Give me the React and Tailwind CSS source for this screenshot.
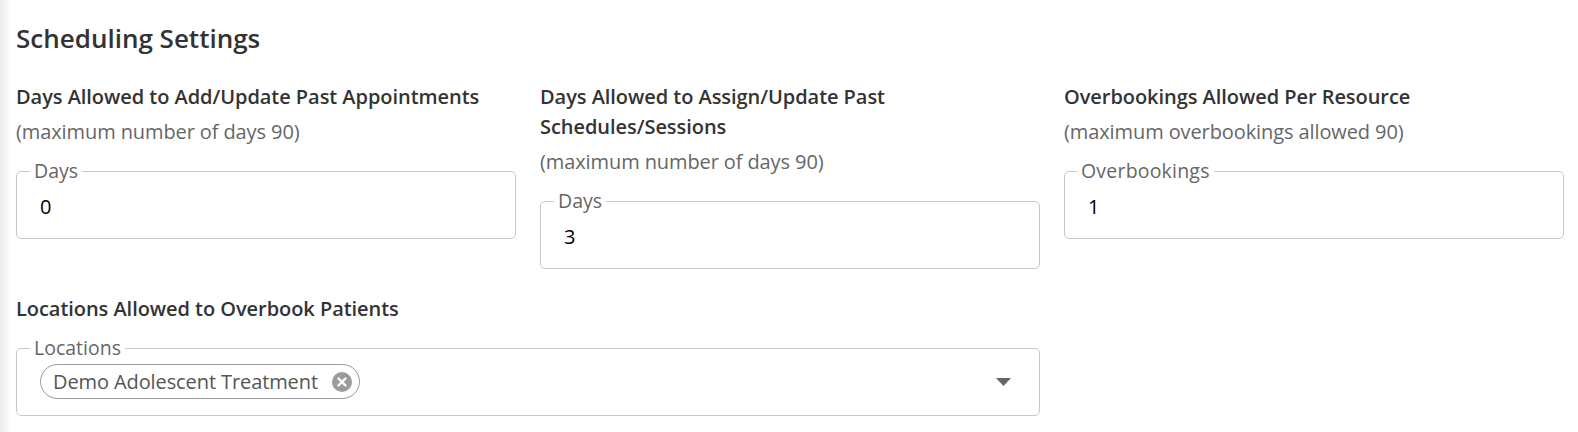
const font = { fontFamily: '"Open Sans", "Noto Sans", Arial, sans-serif' };

function Field({ legend, value, legendClass = "ml-[13px]" }) {
  return (
    <fieldset className="rounded-[5px] border border-[#c8c8c8] pb-[17px]">
      <legend className={`${legendClass} px-1 text-[19.5px] leading-6 text-[#666]`}>
        {legend}
      </legend>
      <div className="pl-[23px] pt-[10px] text-[20px] leading-7 text-black">{value}</div>
    </fieldset>
  );
}

function Heading({ children }) {
  return (
    <div className="text-[20px] font-semibold leading-[30px] tracking-[-0.05px] text-[#333]">
      {children}
    </div>
  );
}

function Hint({ children }) {
  return (
    <div className="mt-[8px] text-[20px] leading-6 tracking-[-0.1px] text-[#666]">
      {children}
    </div>
  );
}

export default function App() {
  return (
    <div
      style={font}
      className="min-h-[432px] bg-[linear-gradient(to_right,#ebebeb,#fff_11px)] pl-4 pr-[14px] pt-[22px]"
    >
      <h2 className="text-[26px] font-semibold leading-8 text-[#333]">
        Scheduling Settings
      </h2>
      <div className="mt-7 grid grid-cols-3 gap-6">
        <div>
          <Heading>Days Allowed to Add/Update Past Appointments</Heading>
          <Hint>(maximum number of days 90)</Hint>
          <div className="mt-[15px]">
            <Field legend="Days" value="0" />
          </div>
        </div>
        <div>
          <Heading>
            Days Allowed to Assign/Update Past
            <br />
            Schedules/Sessions
          </Heading>
          <Hint>(maximum number of days 90)</Hint>
          <div className="mt-[15px]">
            <Field legend="Days" value="3" />
          </div>
        </div>
        <div>
          <Heading>Overbookings Allowed Per Resource</Heading>
          <Hint>(maximum overbookings allowed 90)</Hint>
          <div className="mt-[15px]">
            <Field legend="Overbookings" value="1" legendClass="ml-[12px] tracking-[0.2px]" />
          </div>
        </div>
      </div>
      <div className="mt-[25px] grid grid-cols-3 gap-6">
        <div className="col-span-2">
          <Heading>Locations Allowed to Overbook Patients</Heading>
          <fieldset className="mt-[12px] rounded-[5px] border border-[#c8c8c8] pb-[16px] pl-[23px] pr-[28px]">
            <legend className="-ml-[10px] px-1 text-[19.5px] leading-6 text-[#666]">
              Locations
            </legend>
            <div className="flex items-center justify-between pt-[4px]">
              <div className="flex h-[35px] items-center gap-[14px] rounded-full border border-[#999] pl-3 pr-[7px] text-[20px] tracking-[-0.1px] text-[#555]">
                <span>Demo Adolescent Treatment</span>
                <svg width="20" height="20" viewBox="0 0 20 20">
                  <circle cx="10" cy="10" r="10" fill="#9b9b9b" />
                  <path d="M6.5 6.5 L13.5 13.5 M13.5 6.5 L6.5 13.5" stroke="#fff" strokeWidth="2.4" strokeLinecap="round" />
                </svg>
              </div>
              <svg width="15" height="8" viewBox="0 0 15 8" className="mt-[1px]">
                <path d="M0 0 H15 L7.5 8 Z" fill="#666" />
              </svg>
            </div>
          </fieldset>
        </div>
      </div>
    </div>
  );
}
